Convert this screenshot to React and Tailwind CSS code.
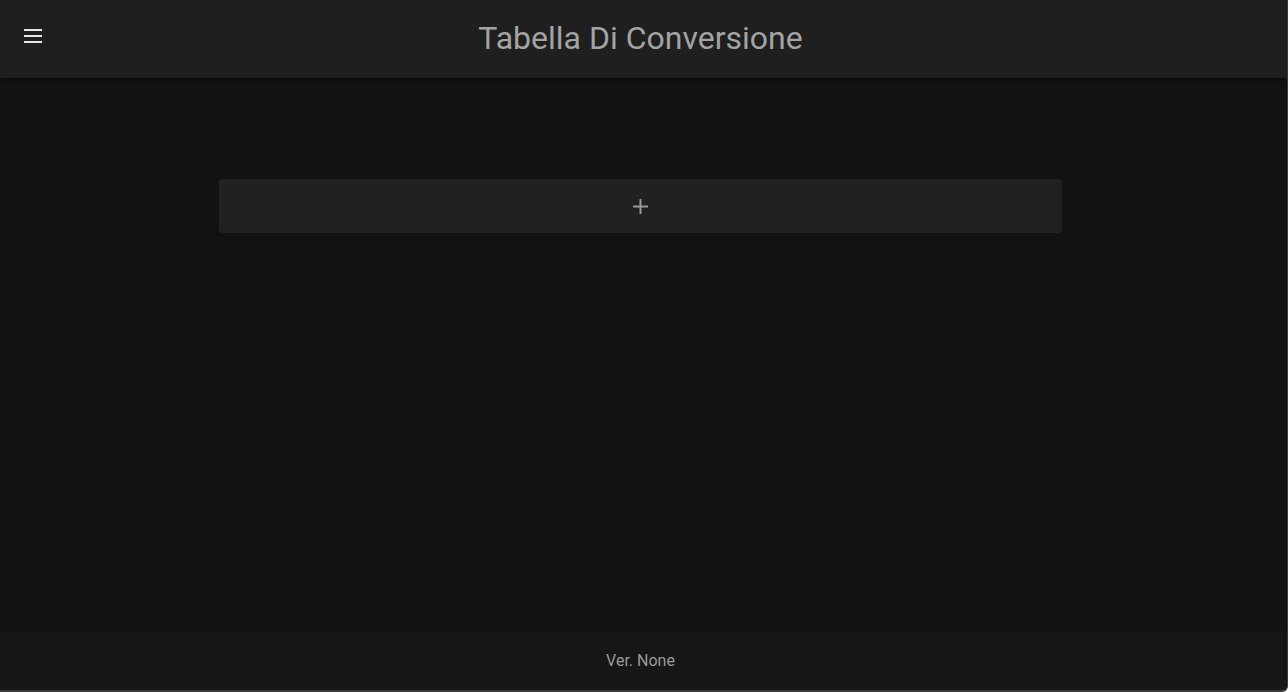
import React from "react";

const App = () => {
  return (
    <div className="h-[692px] w-full flex flex-col bg-[#121212] font-['Roboto',sans-serif] border-r border-b-2 border-[#3a3a3a] rounded-br-[6px] overflow-hidden">
      <header className="relative h-[78px] shrink-0 bg-[#1f1f1f] flex items-center justify-center pr-[6px] pb-[2px] shadow-[0_2px_4px_rgba(0,0,0,0.4)]">
        <button className="absolute left-[24px] top-[29px] w-[18px] h-[14px] flex flex-col justify-between">
          <span className="block h-[2px] w-full bg-[#e8e8e8]" />
          <span className="block h-[2px] w-full bg-[#e8e8e8]" />
          <span className="block h-[2px] w-full bg-[#e8e8e8]" />
        </button>
        <h1 className="text-[32px] text-[#a3a3a3] leading-none">Tabella Di Conversione</h1>
      </header>
      <main className="flex-1 pr-[6px] pt-[101px]">
        <button className="mx-auto w-[843px] h-[54px] rounded-[4px] bg-[#212121] flex items-center justify-center text-[#9a9a9a]">
          <svg width="15" height="15" viewBox="0 0 15 15">
            <path d="M7.5 0v15M0 7.5h15" stroke="currentColor" strokeWidth="2" />
          </svg>
        </button>
      </main>
      <footer className="h-[59px] shrink-0 bg-[#161616] flex items-center justify-center pr-[6px]">
        <span className="text-[16px] text-[#9a9a9a]">Ver. None</span>
      </footer>
    </div>
  );
};

export default App;
